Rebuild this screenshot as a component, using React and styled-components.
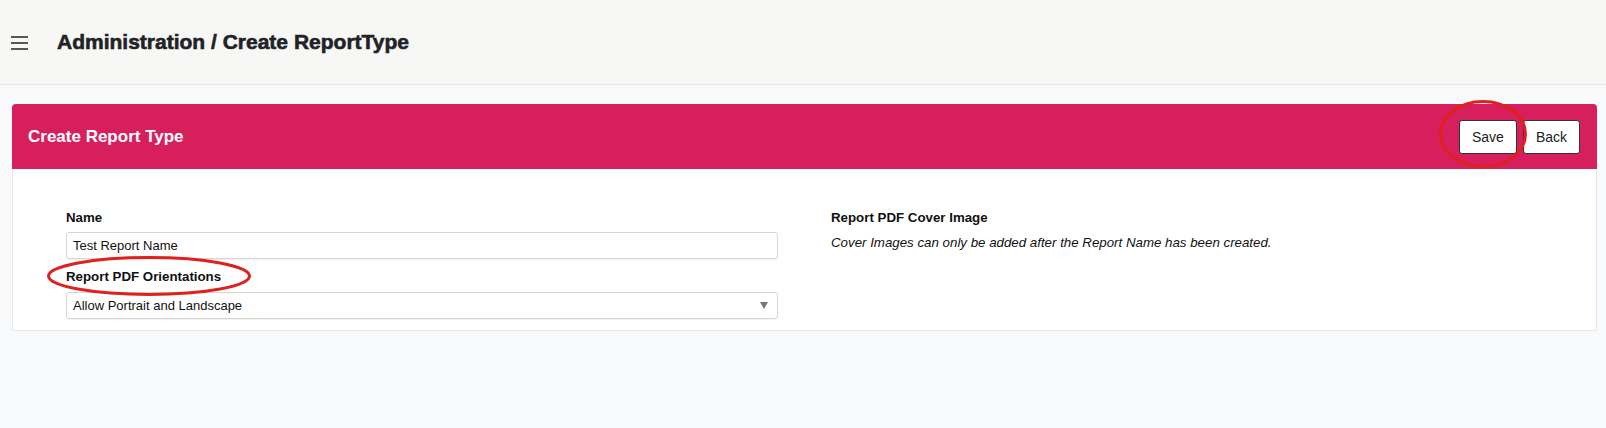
import React from "react";
import styled, { createGlobalStyle } from "styled-components";

const GlobalStyle = createGlobalStyle`
  body {
    margin: 0;
    background: #f8f9fa;
    font-family: "Liberation Sans", Arial, sans-serif;
    color: #222;
  }
`;

const TopBar = styled.div`
  height: 84px;
  display: flex;
  align-items: center;
  padding-left: 11px;
  background: #f7f7f5;
  border-bottom: 1px solid #e4e4e4;
`;

const MenuButton = styled.div`
  width: 17px;
  height: 14px;
  display: flex;
  margin-top: 2px;
`;

const PageTitle = styled.h1`
  margin: 0 0 0 29px;
  font-size: 21px;
  font-weight: 700;
  color: #1f2328;
  -webkit-text-stroke: 0.6px #1f2328;
`;

const Content = styled.div`
  padding: 19px 9px 0 12px;
`;

const Card = styled.div`
  border: 1px solid #e8e8e8;
  border-top: none;
  border-radius: 4px 4px 0 0;
  background: #fff;
`;

const CardHeader = styled.div`
  height: 65px;
  margin: 0 -1px;
  display: flex;
  align-items: center;
  justify-content: space-between;
  padding: 0 17px 0 16px;
  background: #d81f5e;
  border-radius: 4px 4px 0 0;
`;

const CardTitle = styled.h2`
  margin: 0;
  font-size: 17px;
  font-weight: 700;
  color: #fff;
`;

const Actions = styled.div`
  display: flex;
  gap: 6px;
`;

const Marked = styled.span`
  position: relative;
  display: inline-block;
`;

const Ring = styled.svg`
  position: absolute;
  pointer-events: none;
  overflow: visible;
`;

const Button = styled.button`
  height: 34px;
  padding: 0 12px;
  background: #fff;
  border: 1px solid #333;
  border-radius: 3px;
  font-family: "Liberation Sans", Arial, sans-serif;
  font-size: 14px;
  color: #222;
`;

const CardBody = styled.div`
  display: grid;
  grid-template-columns: 712px 1fr;
  column-gap: 53px;
  padding: 41px 0 11px 53px;
`;

const Column = styled.div`
  display: flex;
  flex-direction: column;
`;

const Label = styled.label`
  display: block;
  font-size: 13.3px;
  font-weight: 700;
  line-height: 16px;
  color: #111;
  margin-top: ${(p) => p.$gap || 0}px;
`;

const TextInput = styled.div`
  height: 27px;
  box-sizing: border-box;
  margin-top: ${(p) => p.$gap || 0}px;
  padding: 0 6px;
  display: flex;
  align-items: center;
  justify-content: space-between;
  border: 1px solid #d6d6d6;
  border-radius: 3px;
  box-shadow: 0 1px 1px rgba(0, 0, 0, 0.06);
  font-size: 13px;
  color: #111;
`;

const Caret = styled.span`
  width: 0;
  height: 0;
  margin-right: 3px;
  border-left: 4px solid transparent;
  border-right: 4px solid transparent;
  border-top: 7px solid #777;
`;

const Note = styled.p`
  margin: 9px 0 0;
  font-size: 13.3px;
  font-style: italic;
  line-height: 16px;
  color: #111;
`;

const Ellipse = ({ w, h, style }) => (
  <Ring width={w} height={h} style={style}>
    <ellipse
      cx={w / 2}
      cy={h / 2}
      rx={w / 2 - 1.5}
      ry={h / 2 - 1.5}
      fill="none"
      stroke="#e0201f"
      strokeWidth="3"
    />
  </Ring>
);

const App = () => {
  return (
    <>
      <GlobalStyle />
      <TopBar>
        <MenuButton>
          <svg width="17" height="14" viewBox="0 0 17 14">
            <g stroke="#222" strokeWidth="1.5">
              <line x1="0" y1="1" x2="17" y2="1" />
              <line x1="0" y1="7" x2="17" y2="7" />
              <line x1="0" y1="13" x2="17" y2="13" />
            </g>
          </svg>
        </MenuButton>
        <PageTitle>Administration / Create ReportType</PageTitle>
      </TopBar>
      <Content>
        <Card>
          <CardHeader>
            <CardTitle>Create Report Type</CardTitle>
            <Actions>
              <Marked>
                <Button>Save</Button>
                <Ellipse w={88} h={68} style={{ left: -20, top: -20 }} />
              </Marked>
              <Button>Back</Button>
            </Actions>
          </CardHeader>
          <CardBody>
            <Column>
              <Label>Name</Label>
              <TextInput $gap={6}>Test Report Name</TextInput>
              <Marked>
                <Label $gap={10}>Report PDF Orientations</Label>
                <Ellipse w={204} h={40} style={{ left: -19, top: -3 }} />
              </Marked>
              <TextInput $gap={7}>
                Allow Portrait and Landscape
                <Caret />
              </TextInput>
            </Column>
            <Column>
              <Label>Report PDF Cover Image</Label>
              <Note>
                Cover Images can only be added after the Report Name has been
                created.
              </Note>
            </Column>
          </CardBody>
        </Card>
      </Content>
    </>
  );
};

export default App;
